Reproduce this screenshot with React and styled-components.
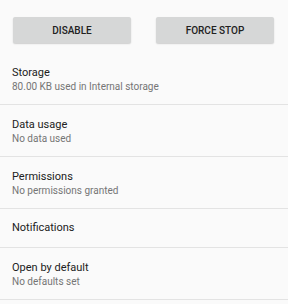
import React from 'react'
import styled, { createGlobalStyle } from 'styled-components'

const GlobalStyle = createGlobalStyle`
    html, body {
        margin:0;
        padding:0;
        background:#fafafa;
        font-family:Roboto, "Noto Sans", "Liberation Sans", sans-serif;
    }
`

const Page = styled.div`
    width:288px;
    background:#fafafa;
`

const ButtonBar = styled.div`
    display:flex;
    justify-content:space-between;
    padding:17px 14px 10px 13px;
`

const ActionButton = styled.button`
    width:118px;
    height:26px;
    border:none;
    border-radius:2px;
    background:#d6d7d7;
    box-shadow:0 1px 1.5px rgba(0,0,0,.18);
    color:#212121;
    font-family:inherit;
    font-size:10px;
    font-weight:500;
    padding:0;
`

const Row = styled.div`
    padding:${props => props.single ? '12px 12px 12px' : '13px 12px 11px'};
    border-bottom:1px solid #e3e3e3;
`

const Title = styled.div`
    font-size:11px;
    line-height:14px;
    color:#212121;
`

const Summary = styled.div`
    font-size:10px;
    line-height:13px;
    color:#757575;
`

const items = [
    { title: 'Storage', summary: '80.00 KB used in Internal storage' },
    { title: 'Data usage', summary: 'No data used' },
    { title: 'Permissions', summary: 'No permissions granted' },
    { title: 'Notifications' },
    { title: 'Open by default', summary: 'No defaults set' },
]

export default function App(){
    return (
        <Page>
            <GlobalStyle />
            <ButtonBar>
                <ActionButton>DISABLE</ActionButton>
                <ActionButton>FORCE STOP</ActionButton>
            </ButtonBar>
            { items.map(item => (
                <Row key={item.title} single={!item.summary}>
                    <Title>{ item.title }</Title>
                    { item.summary && <Summary>{ item.summary }</Summary> }
                </Row>
            )) }
        </Page>
    )
}
